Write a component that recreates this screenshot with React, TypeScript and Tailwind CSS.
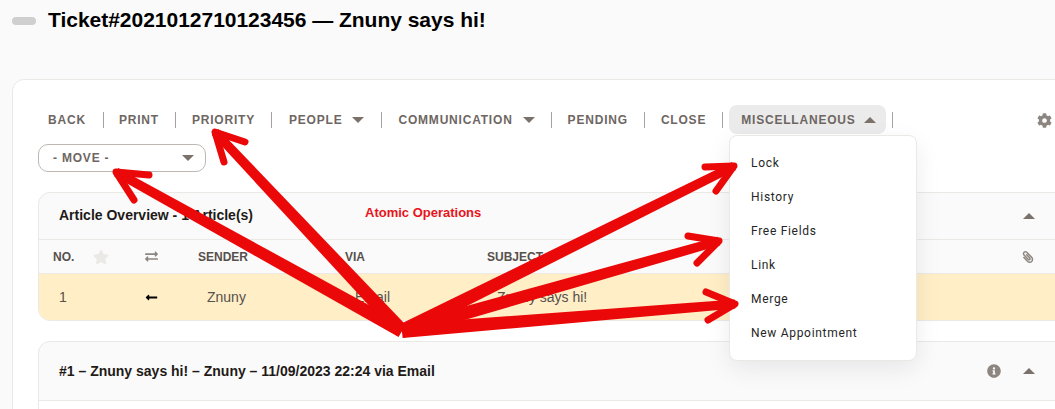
import { FaCog, FaExchangeAlt, FaInfoCircle, FaLongArrowAltLeft, FaPaperclip, FaStar } from 'react-icons/fa';

const Caret = ({ up = false, className = '' }: { up?: boolean; className?: string }) => (
  <svg width="12" height="6" viewBox="0 0 12 6" className={className}>
    <path d={up ? 'M6 0 L12 6 L0 6 Z' : 'M0 0 L12 0 L6 6 Z'} fill="#7a716b" />
  </svg>
);

const Sep = () => <span className="h-4 w-px bg-[#a8a29e]" />;

const menuItems = ['Lock', 'History', 'Free Fields', 'Link', 'Merge', 'New Appointment'];

// shaft from the common origin, then a two-stroke head
const arrows = [
  { tip: [116, 172], head: 'M149 175 L116 172 L134 200' },
  { tip: [215, 132], head: 'M245 142 L215 132 L224 162' },
  { tip: [734, 166], head: 'M705 167 L734 166 L716 191' },
  { tip: [719, 241], head: 'M688 236 L719 241 L697 263' },
  { tip: [735, 304], head: 'M706 292 L735 304 L708 320' },
];

// shaft gets thinner towards the tip, like a hand drawn marker
const shaft = ([x, y]: number[]) => {
  const [ox, oy] = [402, 331];
  const len = Math.hypot(x - ox, y - oy);
  const [nx, ny] = [-(y - oy) / len, (x - ox) / len];
  const base = 7;
  const end = 4.5;
  return [
    [ox + nx * base, oy + ny * base],
    [x + nx * end, y + ny * end],
    [x - nx * end, y - ny * end],
    [ox - nx * base, oy - ny * base],
  ].map((p) => p.join(',')).join(' ');
};

export default function App() {
  return (
    <div className="relative h-[409px] w-[1055px] overflow-hidden bg-[#fafafa] font-['Liberation_Sans',sans-serif]">
      <div className="flex h-[79px] items-start pl-3 pt-[7px]">
        <span className="mt-[10px] h-2 w-6 rounded-full bg-[#cfcfcf]" />
        <h1 className="ml-3 text-[21px] leading-[26px] font-bold tracking-[-0.02px] text-black">Ticket#2021012710123456 — Znuny says hi!</h1>
      </div>

      <div className="ml-3 h-[340px] w-[1060px] rounded-tl-xl border border-[#ebe9e6] bg-white pl-[25px] pt-[25px]">
        <div className="flex h-[30px] items-center text-[12px] font-bold tracking-[0.8px] text-[#6e6662]">
          <span className="ml-[10px] mr-[17px]">BACK</span>
          <Sep />
          <span className="ml-[15px] mr-[16px]">PRINT</span>
          <Sep />
          <span className="ml-[16px] mr-[16px]">PRIORITY</span>
          <Sep />
          <span className="ml-[17px] mr-[17px] flex items-center gap-[10px]">PEOPLE <Caret /></span>
          <Sep />
          <span className="ml-[16px] mr-[16px] flex items-center gap-[10px]">COMMUNICATION <Caret /></span>
          <Sep />
          <span className="ml-[16px] mr-[16px]">PENDING</span>
          <Sep />
          <span className="ml-[16px] mr-[16px]">CLOSE</span>
          <Sep />
          <span className="mx-[6px] flex h-[29px] items-center gap-[8px] self-start rounded-lg bg-[#ebebeb] pl-3 pr-[10px]">MISCELLANEOUS <Caret up /></span>
          <Sep />
          <FaCog className="ml-[144px] text-[15px] text-[#8d8680]" />
        </div>

        <div className="mt-[9px] flex h-[28px] w-[168px] items-center justify-between rounded-[10px] border border-[#bdb8b3] bg-white pl-[14px] pr-[11px] text-[12px] font-bold tracking-[0.8px] text-[#6e6662]">
          <span>- MOVE -</span>
          <Caret />
        </div>

        <div className="mt-[20px] h-[129px] overflow-hidden rounded-xl border border-[#ebe9e6] bg-[#fafafa]">
          <div className="flex h-[46px] items-center justify-between pl-5 pr-[35px]">
            <span className="mb-[2px] text-[14px] font-bold text-[#1f1a17]">Article Overview - 1 Article(s)</span>
            <Caret up />
          </div>
          <div className="flex h-[35px] items-center border-y border-[#ebe9e6] text-[12px] font-bold text-[#57504c]">
            <span className="ml-[14px] w-[40px]">NO.</span>
            <FaStar className="mr-[36px] w-[16px] text-[16px] text-[#ebe9e6]" />
            <FaExchangeAlt className="w-[13px] text-[13px] text-[#8d8680]" />
            <span className="ml-[40px] w-[147px]">SENDER</span>
            <span className="w-[142px]">VIA</span>
            <span className="w-[535px]">SUBJECT</span>
            <FaPaperclip className="-scale-x-100 text-[12px] text-[#8d8680]" />
          </div>
          <div className="flex h-[47px] items-center bg-[#ffeec6] text-[14px] text-[#57504c]">
            <span className="ml-5 w-[86px]">1</span>
            <FaLongArrowAltLeft className="w-[13px] text-[13px] text-black" />
            <span className="ml-[49px] w-[148px]">Znuny</span>
            <span className="w-[142px]">Email</span>
            <span>Znuny says hi!</span>
          </div>
        </div>

        <div className="mt-[20px] h-[80px] overflow-hidden rounded-t-xl border border-[#ebe9e6] bg-[#fafafa]">
          <div className="flex h-[59px] items-center border-b border-[#ebe9e6] pl-5 pr-[35px]">
            <span className="text-[14px] font-bold text-[#1f1a17]">#1 – Znuny says hi! – Znuny – 11/09/2023 22:24 via Email</span>
            <FaInfoCircle className="ml-auto mr-[22px] text-[14px] text-[#8d8680]" />
            <Caret up />
          </div>
          <div className="h-5 bg-white" />
        </div>
      </div>

      <div className="absolute left-[729px] top-[135px] flex h-[226px] w-[188px] flex-col justify-center gap-[14px] rounded-lg border border-[#ebe9e6] bg-white pl-[21px] font-['Roboto',sans-serif] text-[12px] leading-[20px] tracking-[0.7px] text-[#262626] shadow-[0_8px_24px_rgba(0,0,0,0.08)]">
        {menuItems.map((item) => (
          <span key={item}>{item}</span>
        ))}
      </div>

      <span className="absolute left-[365px] top-[203px] text-[13px] font-bold text-[#e8141c]">Atomic Operations</span>

      <svg className="absolute inset-0 pointer-events-none" width="1055" height="409" fill="none" stroke="#eb0808" strokeLinecap="round" strokeLinejoin="round">
        {arrows.map((a) => (
          <g key={a.head}>
            <polygon points={shaft(a.tip)} fill="#eb0808" stroke="none" />
            <path d={a.head} strokeWidth="7" />
          </g>
        ))}
      </svg>
    </div>
  );
}
